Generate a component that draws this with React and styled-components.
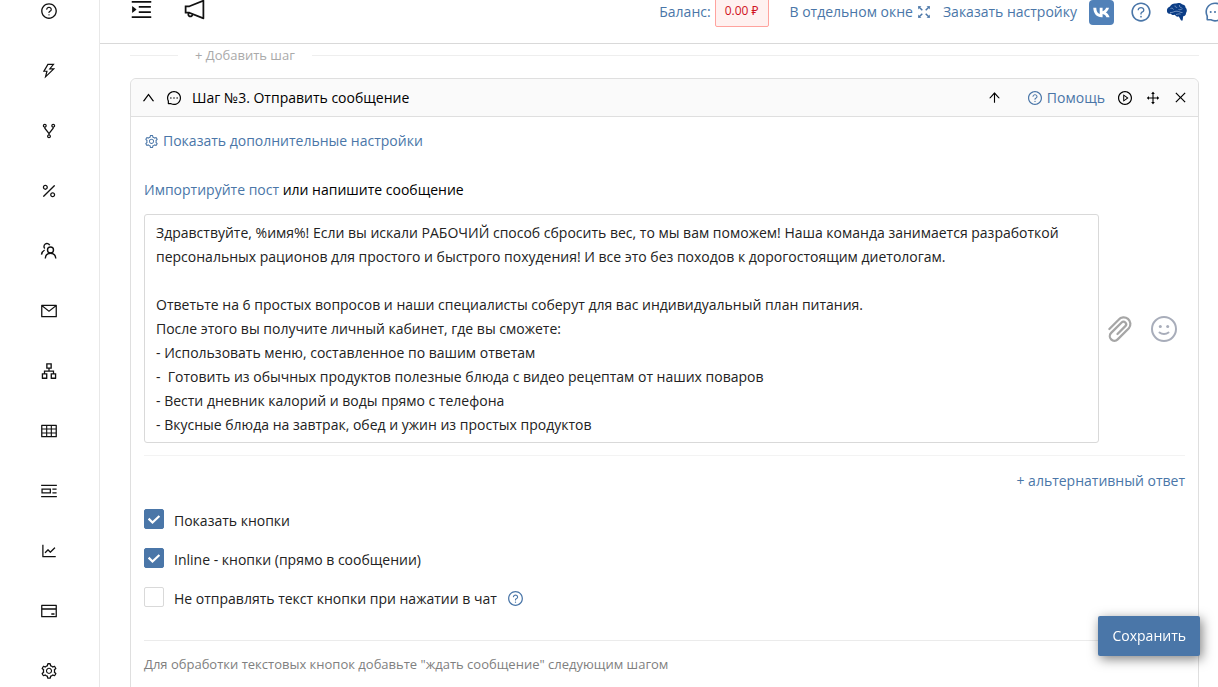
import React, { useState } from "react";
import styled, { createGlobalStyle } from "styled-components";
import {
  AiOutlineApartment,
  AiOutlineArrowUp,
  AiOutlineClose,
  AiOutlineCreditCard,
  AiOutlineDrag,
  AiOutlineFork,
  AiOutlineLineChart,
  AiOutlineMail,
  AiOutlineMenuUnfold,
  AiOutlineMessage,
  AiOutlineNotification,
  AiOutlinePercentage,
  AiOutlinePicLeft,
  AiOutlinePlayCircle,
  AiOutlineQuestionCircle,
  AiOutlineSetting,
  AiOutlineTable,
  AiOutlineThunderbolt,
  AiOutlineUp,
} from "react-icons/ai";

const blue = "#4a76a8";

const GlobalStyle = createGlobalStyle`
  *, *::before, *::after {
    box-sizing: border-box;
  }
  body {
    margin: 0;
    overflow: hidden;
    background: #fff;
    color: #222;
    font-family: "Open Sans", "Noto Sans", sans-serif;
    font-size: 14px;
    line-height: 24px;
  }
  a {
    color: ${blue};
    text-decoration: none;
  }
  button {
    padding: 0;
    border: 0;
    background: none;
    color: inherit;
    font: inherit;
    cursor: pointer;
  }
  svg {
    display: block;
    flex: none;
  }
`;

const Layout = styled.div`
  display: grid;
  grid-template-columns: 100px minmax(0, 1fr);
  height: 100vh;
`;

const Sidebar = styled.nav`
  border-right: 1px solid #e8e8e8;
  overflow: hidden;
`;

const SideList = styled.ul`
  margin: -19px 0 0;
  padding: 0;
  list-style: none;
`;

const SideLink = styled.a`
  display: flex;
  align-items: center;
  justify-content: center;
  height: 60px;
  padding-right: 1px;
  color: #111;
  font-size: 18px;
`;

const Main = styled.div`
  display: flex;
  flex-direction: column;
  overflow: hidden;
`;

const Topbar = styled.header`
  display: flex;
  flex: none;
  align-items: flex-start;
  justify-content: space-between;
  height: 44px;
  border-bottom: 1px solid #d9d9d9;
`;

const TopTools = styled.div`
  display: flex;
  gap: 28px;
  padding-left: 29px;
  color: #111;
  margin-top: -3px;
`;

const TopLinks = styled.div`
  display: flex;
  align-items: center;
  height: 24px;
  margin-right: -20px;
  color: ${blue};
`;

const TopLink = styled.a`
  display: flex;
  align-items: center;
  gap: 4px;
  margin-right: ${(p) => p.$space || "12px"};
`;

const Balance = styled.span`
  height: 32px;
  margin: -2px 21px 0 4px;
  padding: 0 9px;
  border: 1px solid #ffa39e;
  border-radius: 2px;
  background: #fff1f0;
  color: #cf1322;
  font-size: 12px;
  line-height: 30px;
`;

const Content = styled.main`
  padding: 0 19px 0 30px;
`;

const Divider = styled.div`
  display: flex;
  align-items: center;
  gap: 17px;
  height: 22px;
  color: #aaa;
  font-size: 13px;
  &::before,
  &::after {
    content: "";
    width: 48px;
    height: 1px;
    background: #eee;
  }
  &::after {
    flex: 1;
  }
`;

const Card = styled.section`
  height: 700px;
  margin-top: 12px;
  border: 1px solid #dfdfdf;
  border-radius: 6px 6px 0 0;
`;

const CardHead = styled.div`
  display: flex;
  align-items: center;
  justify-content: space-between;
  height: 38px;
  padding: 0 10px;
  border-bottom: 1px solid #dfdfdf;
  border-radius: 6px 6px 0 0;
  background: #fafafa;
  color: #000;
`;

const CardTitle = styled.h2`
  display: flex;
  align-items: center;
  gap: 10px;
  margin: 0;
  font-size: 14px;
  font-weight: 400;
`;

const CardActions = styled.div`
  display: flex;
  align-items: center;
  gap: 12px;
`;

const HelpLink = styled.a`
  display: flex;
  align-items: center;
  gap: 4px;
  margin-left: 13px;
`;

const CardBody = styled.div`
  padding: 12px 13px;
`;

const SettingsLink = styled.a`
  display: flex;
  align-items: center;
  gap: 4px;
  width: fit-content;
`;

const Intro = styled.p`
  margin: 25px 0 12px;
  color: #000;
`;

const Editor = styled.div`
  display: flex;
  align-items: center;
  gap: 8px;
  padding-right: 7px;
`;

const Message = styled.textarea`
  flex: 1;
  height: 229px;
  padding: 6px 11px;
  border: 1px solid #d9d9d9;
  border-radius: 3px;
  background: #fff;
  color: #222;
  font: inherit;
  resize: none;
  overflow: hidden;
  outline: none;
`;

const EditorTools = styled.div`
  display: flex;
  align-items: center;
  gap: 16px;
  color: #a6a6a6;
`;

const Rule = styled.hr`
  height: 1px;
  margin: ${(p) => p.$top} 0 0;
  border: 0;
  background: ${(p) => (p.$light ? "#f3f3f3" : "#ebebeb")};
`;

const AltAnswer = styled.div`
  display: flex;
  justify-content: flex-end;
  margin: 13px 0 8px;
`;

const CheckRow = styled.div`
  display: flex;
  align-items: center;
  height: 39px;
`;

const CheckLabel = styled.label`
  display: flex;
  align-items: center;
  gap: 10px;
  cursor: pointer;
`;

const Checkbox = styled.input`
  appearance: none;
  width: 20px;
  height: 20px;
  margin: 0 0 4px;
  border: 1px solid #d9d9d9;
  border-radius: 2px;
  background: #fff;
  &:checked {
    border-color: ${blue};
    background: ${blue}
      url("data:image/svg+xml,%3Csvg xmlns='http://www.w3.org/2000/svg' viewBox='0 0 18 18'%3E%3Cpath d='M3.600 8.600l3.900 3.900L14.400 6' fill='none' stroke='white' stroke-width='2.200'/%3E%3C/svg%3E");
  }
`;

const HelpButton = styled.button`
  margin-left: 10px;
  color: ${blue};
`;

const Note = styled.p`
  margin: 11px 0;
  color: #808080;
  font-size: 13px;
`;

const SaveButton = styled.button`
  position: fixed;
  right: 18px;
  bottom: 31px;
  height: 40px;
  padding: 0 14px;
  border-radius: 2px;
  background: ${blue};
  box-shadow: 2px 3px 12px rgba(0, 0, 0, 0.5);
  color: #fff;
`;

const UsersIcon = () => (
  <svg width="18" height="18" viewBox="0 0 18 18" fill="none" stroke="currentColor" strokeWidth="1.4">
    <circle cx="10.5" cy="8" r="3" />
    <path d="M5.3 16.5c.2-3 2.2-5.300 5.200-5.300s5 2.300 5.300 5.300" />
    <path d="M9.700 3.300A3 3 0 1 0 4.800 6.600M4.600 8C2.900 8.900 1.800 10.400 1.500 12.600" />
  </svg>
);

const ExpandIcon = () => (
  <svg width="14" height="14" viewBox="0 0 14 14" fill="currentColor">
    <path d="M1 1h3.500L1 4.500zM13 1v3.500L9.500 1zM1 13V9.500L4.500 13zM13 13H9.500L13 9.500z" opacity=".8" />
    <path
      stroke="currentColor"
      strokeWidth="1.5"
      d="M2 2l3.300 3.300M12 2L8.700 5.300M2 12l3.300-3.300M12 12L8.700 8.700"
    />
  </svg>
);

const VkIcon = () => (
  <svg width="25" height="25" viewBox="0 0 25 25">
    <rect width="25" height="25" rx="4" fill="#5181b8" />
    <path
      fill="#fff"
      d="M12.800 17.300C7.600 17.300 4.500 13.700 4.300 7.800h3c.1 4.200 2 5.800 3.400 6.100V7.800h2.900v3.500c1.500-.2 2.900-1.700 3.500-3.500h2.900c-.4 2.200-2 3.900-3.200 4.600 1.200.5 3 1.900 3.800 4.900h-3.200c-.6-1.800-2-3-3.800-3.300v3.300z"
    />
  </svg>
);

const BrainIcon = () => (
  <svg width="22" height="20" viewBox="0 0 22 20">
    <path
      fill="#0b3d86"
      d="M1 9.500C.5 7 2 5 4 4.500 5 2 8 1 10 1.500c2-1 5-.5 6 .8 2 .2 3.500 1.700 3.500 3.200 1.700 1.500 1.700 4 .5 5.500.2 2-1.200 3.200-2.800 3.300l-.6 4.200h-1.500l-2.300-4c-2 .5-3.300-.2-3.800-1.700-2 .6-3.500.2-4-1C2.600 12 1.200 11 1 9.500z"
    />
    <path
      fill="none"
      stroke="#9fb6d8"
      strokeWidth=".7"
      d="M4.500 6.500c1.500-.8 2.500 0 3 1M9 3.500c0 1.500 1 2 2.200 1.800M13.500 3c-.5 1.500.5 2.500 2 2.500M4 10.500c3 .5 4-1.500 7-1.300s3 1.600 5.500 1.300M12.500 7.500c1.300.7 3-.3 4-.8M10 12.500c2-.3 3-1 4.500-.3"
    />
  </svg>
);

const ClipIcon = () => (
  <svg width="27" height="27" viewBox="0 0 24 24" fill="none" stroke="currentColor" strokeWidth="2" strokeLinecap="round">
    <path d="M2.100 12.400L10.300 4.200a5.900 5.900 0 0 1 9.100 7.600l-9.900 9.900a4.100 4.100 0 0 1-5.800-5.800l9.300-9.300a2.300 2.300 0 0 1 3.300 3.300l-7 7" />
  </svg>
);

const SmileIcon = () => (
  <svg width="28" height="28" viewBox="0 0 28 28" fill="none" stroke="#a8adba" strokeWidth="2">
    <circle cx="14" cy="14" r="12" />
    <path d="M9.500 17.500c2.500 2 6.500 2 9 0" strokeLinecap="round" />
    <circle cx="10.300" cy="11.500" r="1.500" fill="#a8adba" stroke="none" />
    <circle cx="17.700" cy="11.500" r="1.500" fill="#a8adba" stroke="none" />
  </svg>
);

const sideItems = [
  { name: "Помощь", icon: <AiOutlineQuestionCircle /> },
  { name: "Автоматизация", icon: <AiOutlineThunderbolt /> },
  { name: "Сценарии", icon: <AiOutlineFork /> },
  { name: "Скидки", icon: <AiOutlinePercentage /> },
  { name: "Пользователи", icon: <UsersIcon /> },
  { name: "Рассылки", icon: <AiOutlineMail /> },
  { name: "Структура", icon: <AiOutlineApartment /> },
  { name: "Таблицы", icon: <AiOutlineTable /> },
  { name: "Лента", icon: <AiOutlinePicLeft /> },
  { name: "Статистика", icon: <AiOutlineLineChart /> },
  { name: "Оплата", icon: <AiOutlineCreditCard /> },
  { name: "Настройки", icon: <AiOutlineSetting /> },
];

const defaultText = `Здравствуйте, %имя%! Если вы искали РАБОЧИЙ способ сбросить вес, то мы вам поможем! Наша команда занимается разработкой персональных рационов для простого и быстрого похудения! И все это без походов к дорогостоящим диетологам.

Ответьте на 6 простых вопросов и наши специалисты соберут для вас индивидуальный план питания.
После этого вы получите личный кабинет, где вы сможете:
- Использовать меню, составленное по вашим ответам
-  Готовить из обычных продуктов полезные блюда с видео рецептам от наших поваров
- Вести дневник калорий и воды прямо с телефона
- Вкусные блюда на завтрак, обед и ужин из простых продуктов`;

function Header() {
  return (
    <Topbar>
      <TopTools>
        <button aria-label="Меню">
          <AiOutlineMenuUnfold size={25} />
        </button>
        <button aria-label="Новости">
          <AiOutlineNotification size={25} />
        </button>
      </TopTools>
      <TopLinks>
        <span>Баланс:</span>
        <Balance>0.00 ₽</Balance>
        <TopLink href="#window">
          В отдельном окне <ExpandIcon />
        </TopLink>
        <TopLink href="#setup">Заказать настройку</TopLink>
        <TopLink href="#vk" aria-label="ВКонтакте" $space="16px">
          <VkIcon />
        </TopLink>
        <TopLink href="#help" aria-label="Помощь" $space="14px">
          <AiOutlineQuestionCircle size={22} />
        </TopLink>
        <TopLink href="#ai" aria-label="Нейросеть" $space="16px">
          <BrainIcon />
        </TopLink>
        <TopLink href="#chat" aria-label="Чат">
          <AiOutlineMessage size={22} />
        </TopLink>
      </TopLinks>
    </Topbar>
  );
}

function App() {
  const [text, setText] = useState(defaultText);
  const [options, setOptions] = useState([
    { id: "show", label: "Показать кнопки", checked: true },
    { id: "inline", label: "Inline - кнопки (прямо в сообщении)", checked: true },
    {
      id: "silent",
      label: "Не отправлять текст кнопки при нажатии в чат",
      checked: false,
      help: true,
    },
  ]);

  const toggle = (id) =>
    setOptions((prev) =>
      prev.map((o) => (o.id === id ? { ...o, checked: !o.checked } : o))
    );

  return (
    <>
      <GlobalStyle />
      <Layout>
        <Sidebar>
          <SideList>
            {sideItems.map((item, key) => (
              <li key={key}>
                <SideLink href="#" aria-label={item.name}>
                  {item.icon}
                </SideLink>
              </li>
            ))}
          </SideList>
        </Sidebar>
        <Main>
          <Header />
          <Content>
            <Divider>
              <button>+ Добавить шаг</button>
            </Divider>
            <Card>
              <CardHead>
                <CardTitle>
                  <button aria-label="Свернуть">
                    <AiOutlineUp size={15} />
                  </button>
                  <AiOutlineMessage size={16} />
                  Шаг №3. Отправить сообщение
                </CardTitle>
                <CardActions>
                  <button aria-label="Выше">
                    <AiOutlineArrowUp size={15} />
                  </button>
                  <HelpLink href="#help">
                    <AiOutlineQuestionCircle size={16} />
                    Помощь
                  </HelpLink>
                  <button aria-label="Запустить">
                    <AiOutlinePlayCircle size={16} />
                  </button>
                  <button aria-label="Переместить">
                    <AiOutlineDrag size={16} />
                  </button>
                  <button aria-label="Удалить">
                    <AiOutlineClose size={15} />
                  </button>
                </CardActions>
              </CardHead>
              <CardBody>
                <SettingsLink href="#settings">
                  <AiOutlineSetting size={15} />
                  Показать дополнительные настройки
                </SettingsLink>
                <Intro>
                  <a href="#import">Импортируйте пост</a> или напишите сообщение
                </Intro>
                <Editor>
                  <Message
                    aria-label="Сообщение"
                    spellCheck={false}
                    value={text}
                    onChange={(e) => setText(e.target.value)}
                  />
                  <EditorTools>
                    <button aria-label="Прикрепить файл">
                      <ClipIcon />
                    </button>
                    <button aria-label="Смайлы">
                      <SmileIcon />
                    </button>
                  </EditorTools>
                </Editor>
                <Rule $top="12px" $light />
                <AltAnswer>
                  <a href="#alt">+ альтернативный ответ</a>
                </AltAnswer>
                {options.map((o) => (
                  <CheckRow key={o.id}>
                    <CheckLabel>
                      <Checkbox
                        type="checkbox"
                        checked={o.checked}
                        onChange={() => toggle(o.id)}
                      />
                      {o.label}
                    </CheckLabel>
                    {o.help && (
                      <HelpButton aria-label="Подсказка">
                        <AiOutlineQuestionCircle size={17} />
                      </HelpButton>
                    )}
                  </CheckRow>
                ))}
                <Rule $top="22px" />
                <Note>
                  Для обработки текстовых кнопок добавьте "ждать сообщение"
                  следующим шагом
                </Note>
              </CardBody>
            </Card>
          </Content>
        </Main>
      </Layout>
      <SaveButton>Сохранить</SaveButton>
    </>
  );
}

export default App;
